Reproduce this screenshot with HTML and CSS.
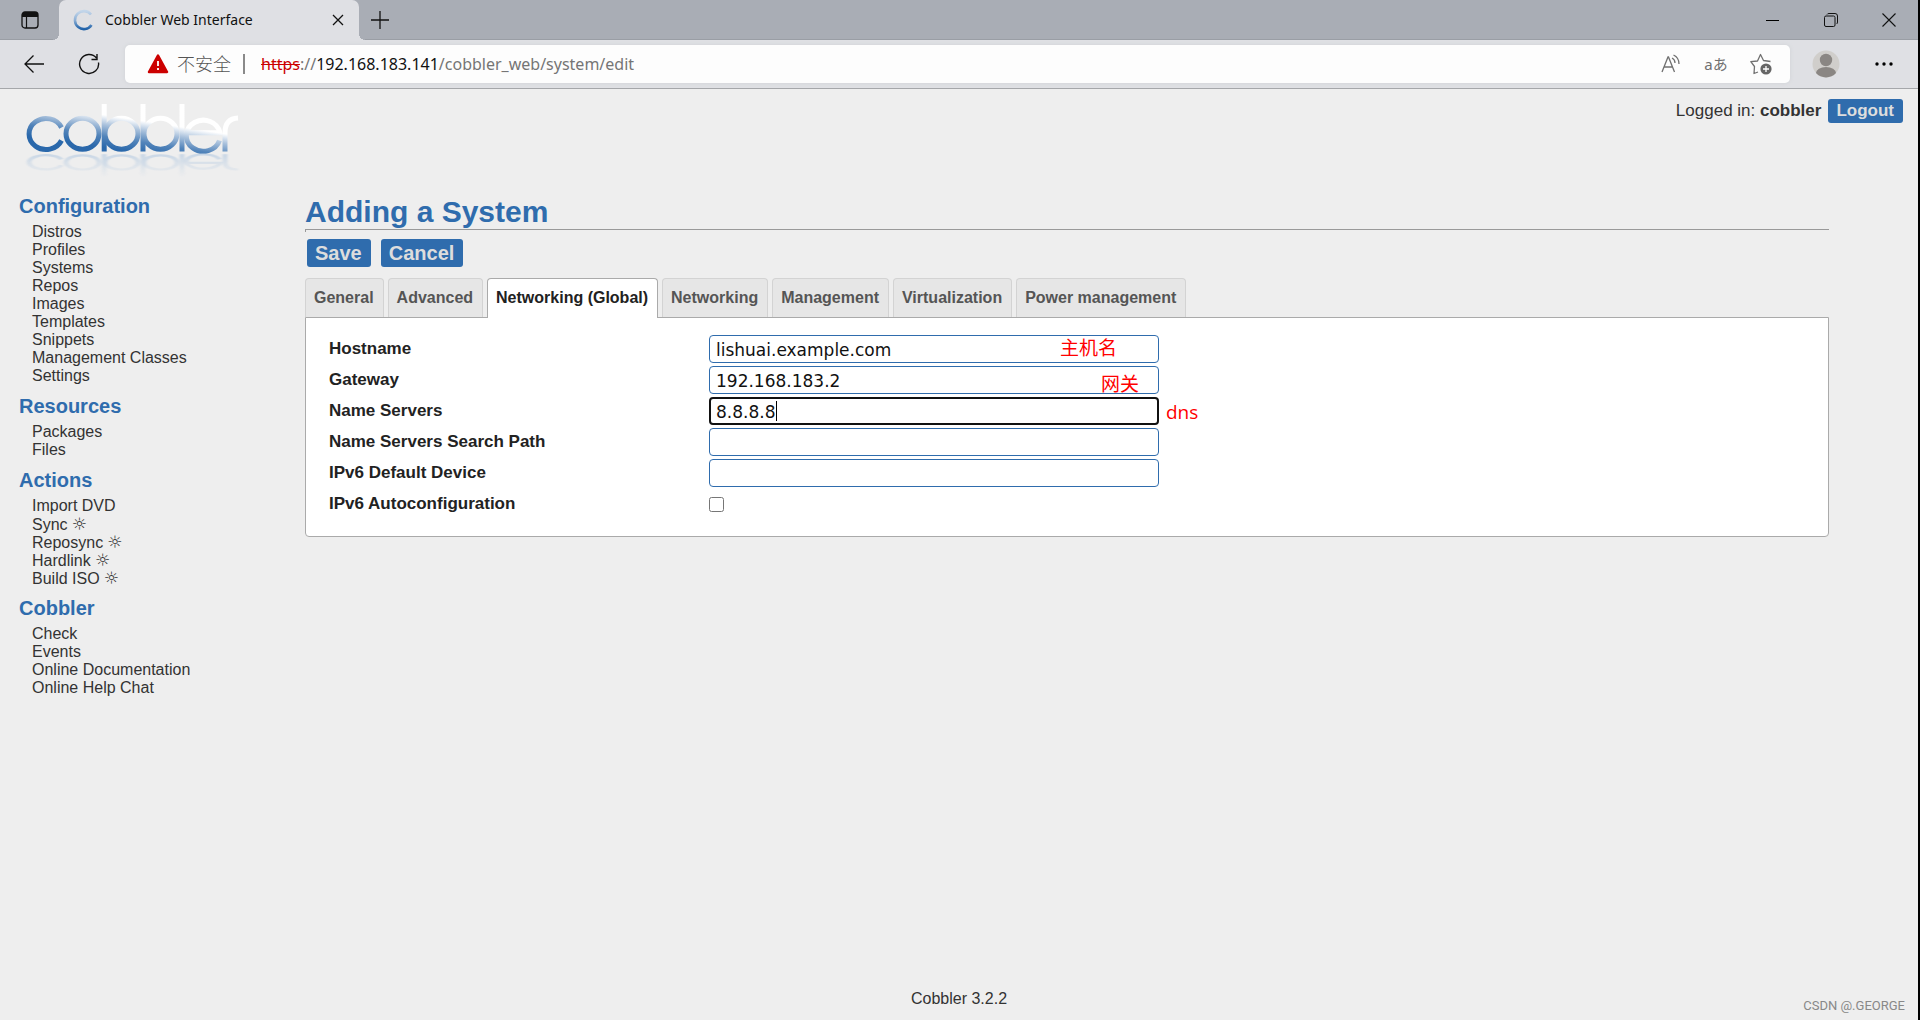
FILE: index.html
```html
<!DOCTYPE html>
<html lang="en">
<head>
<meta charset="utf-8">
<title>Cobbler Web Interface</title>
<link rel="stylesheet" href="styles.css">
</head>
<body>
<header class="browser">
  <div class="tabstrip">
    <button class="strip-btn side" aria-label="Tab actions">
      <svg width="20" height="20" viewBox="0 0 20 20"><rect x="2" y="2" width="16" height="16" rx="3" fill="none" stroke="#111" stroke-width="1.3"/><path d="M2 7V5a3 3 0 0 1 3-3h10a3 3 0 0 1 3 3v2z" fill="#111"/><path d="M6.500 7v11" stroke="#111" stroke-width="1.200"/></svg>
    </button>
    <div class="tab">
      <svg class="favicon" width="22" height="22" viewBox="0 0 22 22"><defs><linearGradient id="fav" x1="0" y1="0" x2="0" y2="1"><stop offset="0" stop-color="#c3d6ea"/><stop offset=".5" stop-color="#8db0d6"/><stop offset="1" stop-color="#1f61a8"/></linearGradient></defs><path d="M19 5.500A9 9 0 1 0 19.500 16" fill="none" stroke="url(#fav)" stroke-width="2.600"/></svg>
      <span class="tab-title">Cobbler Web Interface</span>
      <button class="tab-close" aria-label="Close tab"><svg width="12" height="12" viewBox="0 0 12 12"><path d="M1 1l10 10M11 1L1 11" stroke="#111" stroke-width="1.300"/></svg></button>
    </div>
    <button class="strip-btn" aria-label="New tab"><svg width="18" height="18" viewBox="0 0 18 18"><path d="M9 0v18M0 9h18" stroke="#111" stroke-width="1.300"/></svg></button>
    <div class="window-controls">
      <button aria-label="Minimize"><svg width="14" height="14" viewBox="0 0 14 14"><path d="M0 7.500h13" stroke="#000"/></svg></button>
      <button aria-label="Restore"><svg width="14" height="14" viewBox="0 0 14 14" fill="none" stroke="#111"><rect x=".5" y="3" width="10.500" height="10.500" rx="1.500"/><path d="M3 1.500Q3.500.5 5 .5h6a2.500 2.500 0 0 1 2.500 2.500v6q0 1.500-1 2"/></svg></button>
      <button aria-label="Close"><svg width="14" height="14" viewBox="0 0 14 14"><path d="M.5.5l13 13M13.500.5l-13 13" stroke="#111" stroke-width="1.100"/></svg></button>
    </div>
  </div>
  <div class="toolbar">
    <div class="nav-group">
      <button class="icon-btn" aria-label="Back"><svg width="22" height="20" viewBox="0 0 22 20" fill="none" stroke="#111" stroke-width="1.300"><path d="M21 10H2M10.500 1.500L2 10l8.500 8.500"/></svg></button>
      <button class="icon-btn" aria-label="Reload"><svg width="22" height="22" viewBox="0 0 22 22" fill="none" stroke="#111" stroke-width="1.400"><path d="M20.500 9.500A9.500 9.500 0 1 1 18.500 5M19 1v5.500h-5.500"/></svg></button>
    </div>
    <div class="address">
      <svg width="22" height="20" viewBox="0 0 22 20"><path d="M11 1.500L20 18H2z" fill="#c00" stroke="#c00" stroke-width="2.500" stroke-linejoin="round"/><path d="M11 7v5M11 14v2" stroke="#fff" stroke-width="1.800"/></svg>
      <span class="insecure">不安全</span>
      <span class="divider"></span>
      <span class="url"><del>https</del>://<b>192.168.183.141</b>/cobbler_web/system/edit</span>
      <div class="address-actions">
        <button class="icon-btn" aria-label="Read aloud"><svg width="20" height="20" viewBox="0 0 20 20" fill="none" stroke="#707070" stroke-width="1.300"><path d="M1 18L7 3h.5l6 15M3 13h8.500M11 4q3 1.500 3 5M12.500 1q5.500 2.500 5.500 9"/></svg></button>
        <button class="icon-btn translate" aria-label="Translate">aあ</button>
        <button class="icon-btn" aria-label="Add to favorites"><svg width="22" height="22" viewBox="0 0 22 22"><path d="M8 19l-4 1.500.5-7L.8 8.700 7.500 8 10.500 1.500 13.500 7.500l7 1M10.500 1.500" fill="none" stroke="#707070" stroke-width="1.300" stroke-linejoin="round"/><circle cx="16" cy="16" r="5.600" fill="#666"/><path d="M16 13v6M13 16h6" stroke="#fff" stroke-width="1.300"/></svg></button>
      </div>
    </div>
    <div class="profile-group">
      <button class="icon-btn" aria-label="Profile"><svg width="28" height="28" viewBox="0 0 28 28"><circle cx="14" cy="14" r="13.500" fill="#d0cecb"/><circle cx="14" cy="10" r="6.200" fill="#8a8683"/><path d="M4 23a10 6 0 0 1 20 0 13.500 13.500 0 0 1-20 0z" fill="#8a8683"/></svg></button>
      <button class="icon-btn" aria-label="Settings and more"><svg width="18" height="4" viewBox="0 0 18 4"><circle cx="2" cy="2" r="1.700"/><circle cx="9" cy="2" r="1.700"/><circle cx="16" cy="2" r="1.700"/></svg></button>
    </div>
  </div>
</header>

<div class="app">
  <div class="banner">
    <svg class="logo" width="216" height="76" viewBox="24 102 216 76" role="img" aria-label="cobbler">
      <defs>
        <linearGradient id="ink" gradientUnits="userSpaceOnUse" x1="124" y1="118" x2="119" y2="150"><stop offset="0" stop-color="#fff"/><stop offset=".3" stop-color="#a9c1dc"/><stop offset=".65" stop-color="#5284ba"/><stop offset="1" stop-color="#2a68ab"/></linearGradient>
        <linearGradient id="shade" gradientUnits="userSpaceOnUse" x1="0" y1="100" x2="0" y2="153"><stop offset="0" stop-color="#b5cbe2" stop-opacity="0"/><stop offset="1" stop-color="#a0bddc"/></linearGradient>
        <filter id="soft"><feGaussianBlur stdDeviation="1"/></filter>
        <g id="wordmark" fill="none" stroke-width="5">
          <path d="M61.500 127.500A17 15.500 0 1 0 61.500 140.500"/>
          <ellipse cx="82.500" cy="133.700" rx="16.500" ry="15.500"/>
          <path d="M104.200 104v47.500M143 104v47.500M182 104v47.500"/>
          <ellipse cx="121.500" cy="133.700" rx="16.500" ry="15.500"/>
          <ellipse cx="160.500" cy="133.700" rx="16.500" ry="15.500"/>
          <path d="M219.500 140.500A17 15.500 0 1 1 220 132.700H188"/>
          <path d="M225 151.500V133Q225 118.500 238 118"/>
        </g>
      </defs>
      <use href="#wordmark" stroke="url(#ink)"/>
      <g opacity=".5" transform="translate(0 224) scale(1 -.46)"><use href="#wordmark" stroke="url(#shade)" filter="url(#soft)"/></g>
    </svg>
    <div class="login"><span>Logged in: <strong>cobbler</strong></span><button class="btn btn-small">Logout</button></div>
  </div>

  <div class="body">
    <nav class="sidebar">
      <h2>Configuration</h2>
      <ul><li><a href="#">Distros</a></li><li><a href="#">Profiles</a></li><li><a href="#">Systems</a></li><li><a href="#">Repos</a></li><li><a href="#">Images</a></li><li><a href="#">Templates</a></li><li><a href="#">Snippets</a></li><li><a href="#">Management Classes</a></li><li><a href="#">Settings</a></li></ul>
      <h2>Resources</h2>
      <ul><li><a href="#">Packages</a></li><li><a href="#">Files</a></li></ul>
      <h2>Actions</h2>
      <ul><li><a href="#">Import DVD</a></li><li><a href="#">Sync <span class="sun">☼</span></a></li><li><a href="#">Reposync <span class="sun">☼</span></a></li><li><a href="#">Hardlink <span class="sun">☼</span></a></li><li><a href="#">Build ISO <span class="sun">☼</span></a></li></ul>
      <h2>Cobbler</h2>
      <ul><li><a href="#">Check</a></li><li><a href="#">Events</a></li><li><a href="#">Online Documentation</a></li><li><a href="#">Online Help Chat</a></li></ul>
    </nav>

    <main>
      <h1>Adding a System</h1>
      <hr>
      <div class="actions"><button class="btn">Save</button><button class="btn">Cancel</button></div>
      <ul class="tabs">
        <li><a href="#">General</a></li>
        <li><a href="#">Advanced</a></li>
        <li><a class="active" href="#">Networking (Global)</a></li>
        <li><a href="#">Networking</a></li>
        <li><a href="#">Management</a></li>
        <li><a href="#">Virtualization</a></li>
        <li><a href="#">Power management</a></li>
      </ul>
      <form class="panel">
        <div class="row"><label for="hostname">Hostname</label><div class="field"><input type="text" id="hostname" value="lishuai.example.com"><span class="note note-host">主机名</span></div></div>
        <div class="row"><label for="gateway">Gateway</label><div class="field"><input type="text" id="gateway" value="192.168.183.2"><span class="note note-gateway">网关</span></div></div>
        <div class="row"><label for="dns">Name Servers</label><div class="field"><input type="text" id="dns" class="focused" value="8.8.8.8"><span class="caret"></span><span class="note note-dns">dns</span></div></div>
        <div class="row"><label for="search">Name Servers Search Path</label><div class="field"><input type="text" id="search"></div></div>
        <div class="row"><label for="v6dev">IPv6 Default Device</label><div class="field"><input type="text" id="v6dev"></div></div>
        <div class="row"><label for="v6auto">IPv6 Autoconfiguration</label><div class="field"><input type="checkbox" id="v6auto"></div></div>
      </form>
    </main>
  </div>
  <footer>Cobbler 3.2.2</footer>
</div>
<div class="watermark">CSDN @.GEORGE</div>
</body>
</html>
```

FILE: styles.css
```css
* { box-sizing: border-box; }

body {
  margin: 0;
  min-height: 100vh;
  display: flex;
  flex-direction: column;
  position: relative;
  border-right: 2px solid #000;
  background: #eee;
  color: #333;
  font: 16px/18px "Liberation Sans", Arial, sans-serif;
}

button {
  border: 0;
  padding: 0;
  background: none;
  font: inherit;
  color: inherit;
}

a { color: inherit; text-decoration: none; }
ul { list-style: none; margin: 0; padding: 0; }
svg { display: block; }

/* Browser chrome */
.browser {
  background: #dfe0e4;
  border-bottom: 1px solid #a5a7aa;
  font-family: "Noto Sans", "Noto Sans CJK SC", sans-serif;
}

.tabstrip {
  display: flex;
  height: 40px;
  background: #a9adb5;
  box-shadow: inset 0 -1px #9a9ea5;
}

.strip-btn {
  width: 42px;
  display: grid;
  place-items: center;
}

.strip-btn.side { width: 59px; }

.tab {
  position: relative;
  display: flex;
  align-items: center;
  width: 300px;
  padding: 0 15px 0 13px;
  gap: 11px;
  border-radius: 7px 7px 0 0;
  background: #dfe0e4;
  font-size: 14px;
  color: #111;
}

.tab::before,
.tab::after {
  content: "";
  position: absolute;
  bottom: 0;
  width: 6px;
  height: 6px;
}

.tab::before {
  right: 100%;
  background: radial-gradient(circle at 0 0, #a9adb5 6px, #dfe0e4 6px);
}

.tab::after {
  left: 100%;
  background: radial-gradient(circle at 100% 0, #a9adb5 6px, #dfe0e4 6px);
}

.tab-title { flex: 1; }

.window-controls { display: flex; margin-left: auto; }

.window-controls button {
  width: 58px;
  display: grid;
  place-items: center;
}

.toolbar {
  display: flex;
  align-items: center;
  height: 48px;
  padding: 0 15px;
  gap: 17px;
}

.nav-group { display: flex; gap: 17px; }
.profile-group { display: flex; gap: 20px; }

.icon-btn {
  width: 38px;
  height: 38px;
  display: grid;
  place-items: center;
}

.address {
  flex: 1;
  display: flex;
  align-items: center;
  height: 38px;
  padding: 0 10px 0 22px;
  border-radius: 5px;
  background: #fdfdfd;
  color: #757575;
  box-shadow: 0 0 4px #d0d2d6;
}

.insecure { margin-left: 8px; font-size: 18px; font-weight: 300; color: #555; }

.divider {
  width: 2px;
  height: 20px;
  margin: 0 16px 0 12px;
  background: #8a8a8a;
}

.url { font-size: 16px; }
.url del { color: #c00; }
.url b { font-weight: 400; color: #111; }
.address-actions { display: flex; gap: 7px; margin-left: auto; }
.translate { font-size: 15px; color: #707070; }

/* Cobbler page */
.app {
  flex: 1;
  display: flex;
  flex-direction: column;
}

.banner {
  display: flex;
  justify-content: space-between;
  align-items: flex-start;
  padding: 10px 15px 0 24px;
}

.logo { margin-top: 3px; }

.login {
  display: flex;
  align-items: center;
  gap: 7px;
  font-size: 17px;
  line-height: 20px;
}

.btn {
  height: 28px;
  padding: 0 9px 0 8px;
  border-radius: 3px;
  background: #2f6cad;
  color: #ddd;
  font-size: 20px;
  font-weight: 700;
  line-height: 28px;
}

.btn-small { height: 24px; font-size: 17px; line-height: 24px; }

.body {
  flex: 1;
  display: flex;
  padding: 16px 89px 0 19px;
}

.sidebar { width: 286px; flex: none; }

.sidebar h2 {
  margin: 0 0 4px;
  color: #2f6cad;
  font-size: 20px;
  line-height: 24px;
}

.sidebar ul { padding: 1px 0 9px 13px; }

.sidebar li { height: 18px; }

.sun { font: 17px/18px "DejaVu Sans", sans-serif; }

main { flex: 1; min-width: 0; }

h1 {
  margin: 0;
  color: #2f6cad;
  font-size: 30px;
  line-height: 35px;
}

hr {
  height: 3px;
  margin: 0;
  border: solid #999;
  border-width: 1px 0 0 1px;
}

.actions { display: flex; gap: 10px; padding: 7px 2px 11px; }

.tabs { display: flex; gap: 4px; }

.tabs a {
  display: block;
  height: 39px;
  padding: 0 9px 0 8px;
  border: 1px solid #d3d3d3;
  border-bottom: 0;
  border-radius: 4px 4px 0 0;
  background: #e6e6e6;
  color: #555;
  font-weight: 700;
  line-height: 38px;
}

.tabs .active {
  height: 40px;
  margin-bottom: -1px;
  position: relative;
  border-color: #aaa;
  background: #fff;
  color: #212121;
}

.panel {
  display: flex;
  flex-direction: column;
  gap: 3px;
  padding: 17px 23px 18px;
  border: 1px solid #aaa;
  border-radius: 0 0 4px 4px;
  background: #fff;
}

.row {
  display: flex;
  align-items: center;
  height: 28px;
}

.row label {
  width: 380px;
  color: #222;
  font-size: 17px;
  font-weight: 700;
}

.field { position: relative; width: 450px; }

.field input[type="text"] {
  display: block;
  width: 100%;
  height: 28px;
  padding: 2px 6px 0;
  border: 1px solid #2f6cad;
  border-radius: 4px;
  outline: 0;
  background: #fff;
  color: #111;
  font: 17px "DejaVu Sans", Verdana, sans-serif;
}

.field input.focused { border: 2px solid #111; padding: 1px 5px 0; }

.field input[type="checkbox"] {
  display: block;
  width: 15px;
  height: 15px;
  margin: 0;
}

.caret {
  position: absolute;
  left: 67px;
  top: 4px;
  width: 1px;
  height: 20px;
  background: #000;
}

.note {
  position: absolute;
  color: #f00;
  font: 19px/20px "Open Sans", "Noto Sans CJK SC", sans-serif;
  white-space: nowrap;
}

.note-host { right: 42px; top: 3px; }
.note-gateway { right: 20px; top: 8px; }
.note-dns { left: 100%; top: 5px; margin-left: 7px; }

footer { padding: 0 0 12px; text-align: center; }

.watermark {
  position: absolute;
  right: 13px;
  bottom: 5px;
  color: #888;
  font: 13px/18px Roboto, sans-serif;
}
```
